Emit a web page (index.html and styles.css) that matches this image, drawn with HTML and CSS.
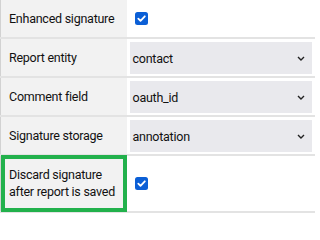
FILE: index.html
```html
<!DOCTYPE html>
<html>
<head>
<meta charset="utf-8">
<link rel="stylesheet" href="styles.css">
</head>
<body>
<table class="form">
  <colgroup><col class="col-label"><col class="col-value"></colgroup>
  <tr>
    <td class="label">Enhanced signature</td>
    <td class="value check-cell">
      <span class="check"><svg width="13" height="13" viewBox="0 0 13 13"><rect x="0" y="0" width="13" height="13" rx="2.5" fill="#0b5fd6"/><path d="M3.3 6.6 L5.5 8.8 L9.8 4.3" fill="none" stroke="#fff" stroke-width="1.8" stroke-linecap="round" stroke-linejoin="round"/></svg></span>
    </td>
  </tr>
  <tr>
    <td class="label">Report entity</td>
    <td class="value"><div class="select"><span>contact</span><svg class="chev" width="8" height="5" viewBox="0 0 8 5"><path d="M1 1 L4 4 L7 1" fill="none" stroke="#222" stroke-width="1.4"/></svg></div></td>
  </tr>
  <tr>
    <td class="label">Comment field</td>
    <td class="value"><div class="select"><span>oauth_id</span><svg class="chev" width="8" height="5" viewBox="0 0 8 5"><path d="M1 1 L4 4 L7 1" fill="none" stroke="#222" stroke-width="1.4"/></svg></div></td>
  </tr>
  <tr>
    <td class="label">Signature storage</td>
    <td class="value"><div class="select"><span>annotation</span><svg class="chev" width="8" height="5" viewBox="0 0 8 5"><path d="M1 1 L4 4 L7 1" fill="none" stroke="#222" stroke-width="1.4"/></svg></div></td>
  </tr>
  <tr class="last">
    <td class="label tall highlight">Discard signature<br>after report is saved</td>
    <td class="value check-cell">
      <span class="check"><svg width="13" height="13" viewBox="0 0 13 13"><rect x="0" y="0" width="13" height="13" rx="2.5" fill="#0b5fd6"/><path d="M3.3 6.6 L5.5 8.8 L9.8 4.3" fill="none" stroke="#fff" stroke-width="1.8" stroke-linecap="round" stroke-linejoin="round"/></svg></span>
    </td>
  </tr>
</table>
</body>
</html>
```
FILE: styles.css
```css
html, body {
  margin: 0;
  padding: 0;
  background: #ffffff;
}
body {
  font-family: Roboto, "Liberation Sans", sans-serif;
  font-size: 12.5px;
  letter-spacing: -0.25px;
  color: #111111;
}
.form {
  border-collapse: collapse;
  table-layout: fixed;
  width: 315px;
  border-left: 1px solid #d2d2d2;
}
.col-label {
  width: 126px;
}
.form td {
  border-bottom: 2px solid #e3e3e3;
  padding: 0;
  vertical-align: middle;
}
.form td.label {
  padding: 0 8px;
  height: 37px;
  background: #f2f2f2;
  line-height: 17px;
  white-space: nowrap;
  overflow: hidden;
}
.form td.label.tall {
  height: auto;
  padding: 10px 8px 11px;
}
.form td.value {
  padding: 3px 3px 2px;
}
.form td.check-cell {
  padding: 0 8px;
}
.check {
  display: block;
  width: 13px;
  height: 13px;
  line-height: 0;
}
.highlight {
  outline: 4px solid #22b14c;
  outline-offset: -4px;
}
.select {
  display: flex;
  align-items: center;
  justify-content: space-between;
  height: 32px;
  background: #e9e9ed;
  padding: 0 7px 0 3px;
}
.chev {
  display: block;
}
```
